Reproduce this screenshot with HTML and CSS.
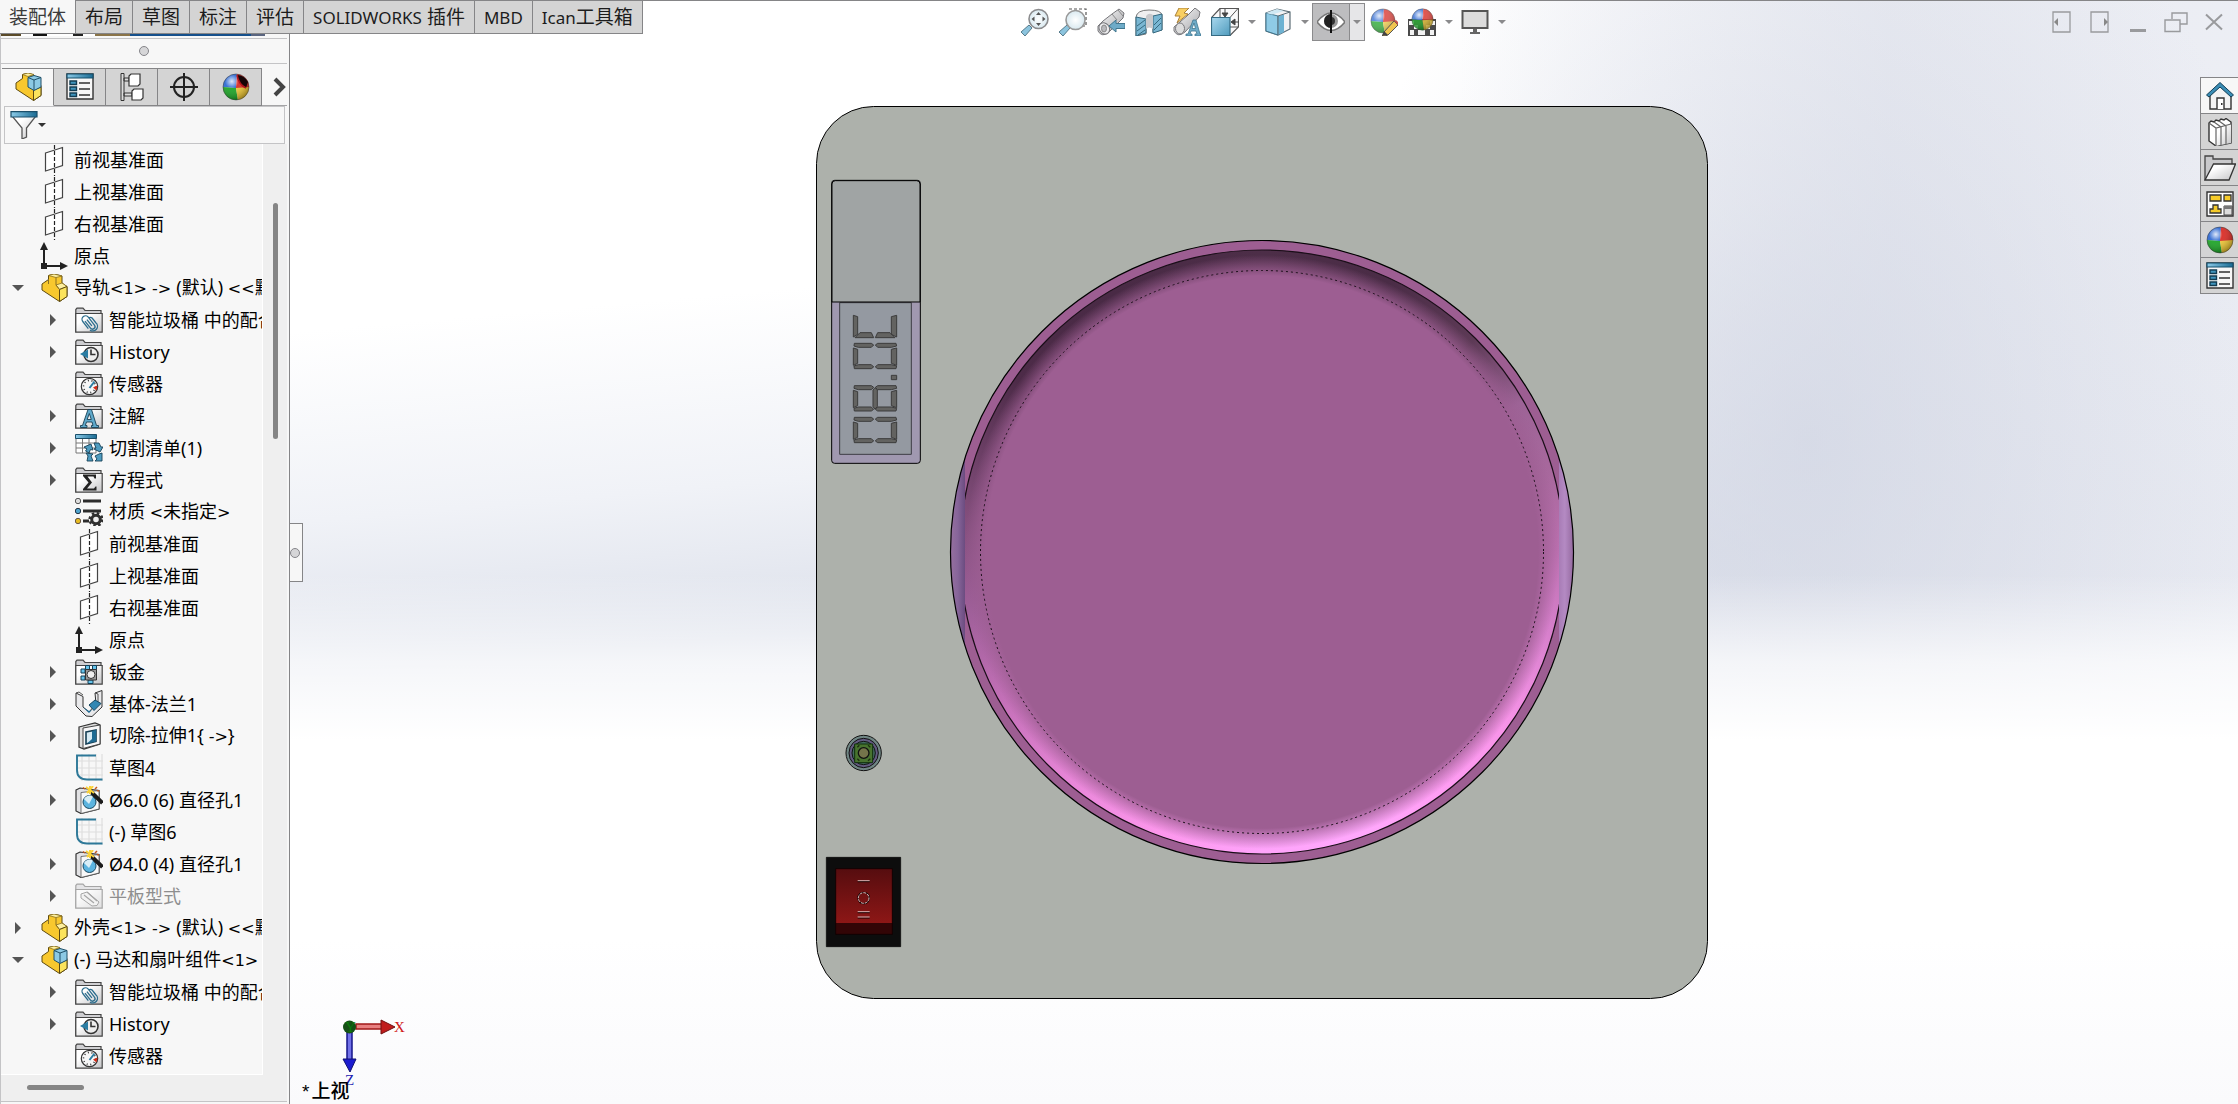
FILE: index.html
```html
<!DOCTYPE html>
<html lang="zh-CN">
<head>
<meta charset="utf-8">
<title>装配体</title>
<link rel="stylesheet" href="styles.css">
</head>
<body>
<svg class="sprite" width="0" height="0" aria-hidden="true">
  <defs>
    <linearGradient id="g-paper" x1="0" y1="0" x2="1" y2="1"><stop offset="0.3" stop-color="#fff"/><stop offset="1" stop-color="#c4c4c6"/></linearGradient>
    <linearGradient id="g-blue" x1="0" y1="0" x2="1" y2="1"><stop offset="0" stop-color="#a9d8ee"/><stop offset="1" stop-color="#4f9bbd"/></linearGradient>
    <linearGradient id="g-bar" x1="0" y1="0" x2="1" y2="0"><stop offset="0" stop-color="#8ccbe8"/><stop offset="1" stop-color="#1a6b93"/></linearGradient>
    <linearGradient id="g-tube" x1="0" y1="0" x2="1" y2="1"><stop offset="0" stop-color="#fff"/><stop offset="1" stop-color="#a2a2a6"/></linearGradient>
    <radialGradient id="g-lens"><stop offset="0" stop-color="#fff"/><stop offset="1" stop-color="#d9e9f0"/></radialGradient>
    <radialGradient id="g-shine" cx="0.35" cy="0.3" r="0.7"><stop offset="0" stop-color="#fff" stop-opacity="0.85"/><stop offset="0.35" stop-color="#fff" stop-opacity="0.1"/><stop offset="1" stop-color="#000" stop-opacity="0.35"/></radialGradient>
    <clipPath id="c-ball"><circle cx="14" cy="14" r="13"/></clipPath>

    <symbol id="i-plane" viewBox="0 0 28 32"><path d="M5.500 9L22.500 3.500V21.500L5.500 27Z" fill="#fff" stroke="#444" stroke-width="1.200"/><path d="M14.500 1V32" stroke="#222" stroke-width="1.200" stroke-dasharray="4 2"/></symbol>
    <symbol id="i-origin" viewBox="0 0 28 28"><path d="M4 5V24H22" fill="none" stroke="#222" stroke-width="2"/><path d="M0 8L4 0L8 8ZM20 20L28 24L20 28ZM1 21H7V27H1Z" fill="#222"/></symbol>
    <symbol id="i-part" viewBox="0 0 28 28"><path d="M2 10L8.500 5.500V1.500L14 0L22 2V9L27 12.500V22.500L19.500 27.500L2 16Z" fill="#f8c82e" stroke="#5d4a12" stroke-linejoin="round"/><path d="M8.500 1.500L16 3.500L22 2L14 0Z M16 11L22 9L27 12.500L19.500 15.500Z" fill="#fdf0a0" stroke="#8a7020" stroke-width="0.800"/><path d="M19.500 15.500L27 12.500V22.500L19.500 27.500Z" fill="#fbe35c" stroke="#5d4a12"/><path d="M16 3.500V11L19.500 15.500M8.500 5.500V10" fill="none" stroke="#8a7020"/></symbol>
    <symbol id="i-asm" viewBox="0 0 28 28"><path d="M2 10L8.500 5.500V1.500L14 0L20 2V9L27 12.500V22.500L19.500 27.500L2 16Z" fill="#f8c82e" stroke="#5d4a12" stroke-linejoin="round"/><path d="M8.500 1.500L14 3.500L20 1.500L14 0Z" fill="#fdf0a0" stroke="#8a7020" stroke-width="0.800"/><path d="M19.500 17L27 14V22.500L19.500 27.500Z" fill="#fbe35c" stroke="#5d4a12"/><path d="M14 4.500L20 2.500L27 4.500V14L20 17.500L14 14Z" fill="#8cc9e4" stroke="#1f4f68"/><path d="M14 4.500L20 7L27 4.500M20 7V17" fill="none" stroke="#1f4f68"/></symbol>
    <symbol id="i-folder" viewBox="0 0 28 28"><path d="M0.800 26.200V3.500L2 2.200H8L10 4.500H26V7.500" fill="#cfcfd2" stroke="#444" stroke-width="1.200"/><path d="M0.800 7.500H27.200V26.200H0.800Z" fill="url(#g-paper)" stroke="#444" stroke-width="1.200"/></symbol>
    <symbol id="i-clip" viewBox="0 0 28 28"><use href="#i-folder"/><g fill="none" stroke="#2c6d8d" stroke-width="1.300" transform="rotate(-38 14 17)"><path d="M10 21V12a3.500 3.500 0 0 1 7 0V22a2.500 2.500 0 0 1 -5 0V13M14.500 13V21M17 13a2.500 2.500 0 0 1 2.500 2V21a4.500 4.500 0 0 1 -9 2"/></g></symbol>
    <symbol id="i-history" viewBox="0 0 28 28"><use href="#i-folder"/><circle cx="16" cy="16.500" r="7" fill="#eee" stroke="#333" stroke-width="1.600"/><path d="M16 11.500V16.500H20.500" fill="none" stroke="#333" stroke-width="1.600"/><path d="M5 16L13 11.500V20.500Z" fill="#2b7da3"/></symbol>
    <symbol id="i-sensor" viewBox="0 0 28 28"><use href="#i-folder"/><circle cx="14.500" cy="16.500" r="8.200" fill="#f6f6f6" stroke="#333" stroke-width="1.200"/><circle cx="14.500" cy="16.500" r="6" fill="none" stroke="#333" stroke-width="1.500" stroke-dasharray="1 2.700"/><path d="M14.500 18L19.500 11.500" stroke="#2b7da3" stroke-width="2"/><path d="M18 17.500L22.500 15.500L21.500 20.500Z" fill="#d42a16"/></symbol>
    <symbol id="i-note" viewBox="0 0 28 28"><use href="#i-folder"/><path d="M5.500 25.500V23.500H7.500L13 7.500H16.500L21.500 23.500H23.500V25.500H16.500V23.500H18L17 20H11.500L10.300 23.500H12V25.500ZM12.200 17.500H16.300L14.300 11.500Z" fill="#5fa9cb" stroke="#173f55" stroke-width="0.900"/></symbol>
    <symbol id="i-cut" viewBox="0 0 28 28"><path d="M1 1H21V19H1Z" fill="#fff" stroke="#777"/><path d="M1 9H21M1 14H21M7.500 4V19M14 4V19" stroke="#777" stroke-width="1"/><path d="M0.500 0.500H21.500V4.500H0.500Z" fill="url(#g-bar)" stroke="#1b4f6a"/><path d="M9 13L16 10L18 16L15.500 15.500L14 19L10.500 17L12 15ZM19 9L24 9L26 13L28 13L25 18L19 15L21 14ZM11 19L18 20L16 22L18 27H12L13 22ZM27 19V27H20L22 25L20 22L24 20Z" fill="#4f9cc0" stroke="#153f56" stroke-width="0.900"/></symbol>
    <symbol id="i-sigma" viewBox="0 0 28 28"><use href="#i-folder"/><path d="M8 8.500H21V12.500H19.500L18.500 10.500H12.500L17 16.500L12 22.500H19L20.500 20.500H21.500V24.500H8V23L13.500 16.500L8 10Z" fill="#222"/></symbol>
    <symbol id="i-material" viewBox="0 0 28 28"><circle cx="3" cy="3" r="2.700" fill="#ddd" stroke="#555"/><circle cx="3" cy="13" r="2.700" fill="#4fa3cc" stroke="#234"/><circle cx="3" cy="23" r="2.700" fill="#e7bb21" stroke="#654"/><path d="M8 3H26M8 13H26M8 23H14" stroke="#2c2c2c" stroke-width="3"/><circle cx="21" cy="21.500" r="4.300" fill="#eee" stroke="#2f2f2f" stroke-width="3"/><circle cx="21" cy="21.500" r="6.300" fill="none" stroke="#2f2f2f" stroke-width="2.600" stroke-dasharray="2.500 2.450"/></symbol>
    <symbol id="i-sheet" viewBox="0 0 28 28"><use href="#i-folder"/><path d="M6 11h4v4H6ZM6 18h4v4H6ZM10.500 7.500h4v4h-4ZM17.500 7.500h4v4h-4ZM13 22h5v3.500h-5Z" fill="#66c4ec" stroke="#123f57"/><path d="M10.500 11.500H21.500V22H10.500Z" fill="#999" stroke="#333"/><circle cx="16" cy="16.500" r="4" fill="#eee" stroke="#333"/></symbol>
    <symbol id="i-flange" viewBox="0 0 28 28"><path d="M1 3L8 6.500V17L14 22L21 14L20 3L27 0.500V17L17 26.500L11 26L1 16Z" fill="#e9e9eb" stroke="#333"/><path d="M1 3L4 2L8 5M20 3L23 4V15" fill="none" stroke="#555"/><path d="M14 15L20 10L26 13.500L19 20.500Z" fill="#3287b3" stroke="#174862"/><path d="M8 17L14 23L17 20L14 21Z" fill="#1d6a94"/></symbol>
    <symbol id="i-extcut" viewBox="0 0 28 28"><path d="M4 5L20 1L25 3V22L9 27L4 25Z" fill="#ddd" stroke="#333" stroke-width="1.200"/><path d="M8 6L25 3V22L8 26.500Z" fill="#f7f7f8" stroke="#444"/><path d="M11 10L21 8V19.500L11 22Z" fill="#d7eaf3" stroke="#153d52" stroke-width="1.600"/><path d="M17 9V17L12 21.500L21 19.500V8Z" fill="#1e6a92"/></symbol>
    <symbol id="i-sketch" viewBox="0 0 28 28"><path d="M7 0V27M14 0V27M21 0V27M27 0V27M2 7H28M2 14H28M2 21H28" stroke="#dedede" stroke-width="1.200"/><path d="M21 1.500H2V16Q2 25.500 12 25.500H27.500" fill="none" stroke="#2d7898" stroke-width="1.900"/></symbol>
    <symbol id="i-hole" viewBox="0 0 28 28"><path d="M1 4L5 2L24 4.500V23L6 27.500L1 25Z" fill="#e2e2e4" stroke="#333" stroke-width="1.200"/><path d="M6 6.500L24 4.500V23L6 27.500Z" fill="#f8f8f8" stroke="#555" stroke-width="0.800"/><circle cx="14.500" cy="16" r="6.500" fill="#5cb4df" stroke="#174862"/><path d="M9 13a6.500 6.500 0 0 1 9-2.500L14 18Z" fill="#d9eef7"/><path d="M14 4L27.500 17" stroke="#1c1c1c" stroke-width="4"/><path d="M11 1L19 7M18 0L12 7M15 0V8" stroke="#fbd33a" stroke-width="2"/><path d="M8 1.500L10 3M22 1L20 3M24 5L22 4.500" stroke="#c4581b" stroke-width="1.500"/></symbol>
    <symbol id="i-flat" viewBox="0 0 28 28"><g opacity="0.45"><use href="#i-folder"/><path d="M6 12L12 10L24 20L22 23.500L17 24L6 16Z" fill="#eee" stroke="#444"/><path d="M9 13L19 21M12 10L22 19" stroke="#444" stroke-width="1.200"/></g></symbol>

    <symbol id="i-props" viewBox="0 0 28 28"><path d="M1 1H27V26H1Z" fill="#f7f7f7" stroke="#333" stroke-width="1.400"/><path d="M1 1H27V5H1Z" fill="url(#g-bar)" stroke="#17506d" stroke-width="1.200"/><path d="M4 8h6.500v3.500H4ZM4 14h6.500v3.500H4ZM4 20h6.500v3.500H4Z" fill="#3f94bd" stroke="#123c52" stroke-width="1.400"/><path d="M13 10H24M13 16H24M13 22H24" stroke="#333" stroke-width="1.400"/></symbol>
    <symbol id="i-config" viewBox="0 0 28 28"><path d="M3 0.500H6V27.500H3ZM6 5H11V8H6ZM6 20H14V23H6Z" fill="#ddd" stroke="#333"/><path d="M11 3L13 1H22V11L20 13H11ZM14 18L16 16H25V25L23 27H14Z" fill="#fff" stroke="#333" stroke-width="1.200"/></symbol>
    <symbol id="i-target" viewBox="0 0 28 28"><circle cx="14" cy="14" r="10" fill="none" stroke="#222" stroke-width="2"/><path d="M14 0V28M0 14H28" stroke="#222" stroke-width="2"/></symbol>
    <symbol id="i-ball" viewBox="0 0 28 28"><g clip-path="url(#c-ball)"><path d="M0 0H15L14 15L0 14Z" fill="#2563d0"/><path d="M15 0H28V15L14 15Z" fill="#d8221b"/><path d="M0 14L14 15L16 28H0Z" fill="#13a11d"/><path d="M14 15L28 14V28H16Z" fill="#efc62d"/><path d="M0 0H28V28H0Z" fill="url(#g-shine)"/></g><circle cx="14" cy="14" r="13" fill="none" stroke="#333" stroke-opacity="0.5"/></symbol>
    <symbol id="i-ballcut" viewBox="0 0 28 28"><use href="#i-ball"/><path d="M15 2Q22 2 26 9L24 15Q17 12 15 2Z" fill="#160406"/><path d="M15 2Q17 12 24 15" fill="none" stroke="#b3151b" stroke-width="1.500"/></symbol>
    <symbol id="i-filter" viewBox="0 0 28 28"><path d="M2 5H26L16.500 17V26L12 28V17Z" fill="url(#g-paper)" stroke="#555" stroke-width="1.300"/><path d="M1 0.700H27V6H1Z" fill="url(#g-bar)" stroke="#1b4f6a" stroke-width="1.200"/></symbol>

    <symbol id="t-fit" viewBox="0 0 28 28"><path d="M0 24L8 17L11 20L4 28Z" fill="#8cc4de" stroke="#567b8b"/><circle cx="17.500" cy="11" r="9.500" fill="url(#g-lens)" stroke="#8b8b8d" stroke-width="1.600"/><path d="M17.500 4L20 7H15ZM17.500 18L20 15H15ZM10.500 11L13.500 8.500V13.500ZM24.500 11L21.500 8.500V13.500Z" fill="#555"/></symbol>
    <symbol id="t-area" viewBox="0 0 28 28"><path d="M10 1H27V18H22" fill="none" stroke="#555" stroke-width="1.200" stroke-dasharray="3 2"/><path d="M0 24L8 17L11 20L4 28Z" fill="#8cc4de" stroke="#567b8b"/><circle cx="16.500" cy="12" r="9.500" fill="url(#g-lens)" stroke="#999" stroke-width="1.600"/></symbol>
    <symbol id="t-prev" viewBox="0 0 28 28"><path d="M1 18L6 13L15 6L22 1L27 5L26 10L12 24Q5 30 1 23Z" fill="url(#g-tube)" stroke="#77777b"/><ellipse cx="7" cy="20.500" rx="5" ry="6" transform="rotate(-35 7 20)" fill="#ececee" stroke="#77777b"/><ellipse cx="7" cy="20.500" rx="2.500" ry="3.500" fill="#b9b9bd" stroke="#888"/><path d="M15 6L20 12M21 2L26 8" stroke="#888"/><path d="M12 18L19 12V15.500H28V20.500H19V24Z" fill="#6eabc8" stroke="#41778f"/></symbol>
    <symbol id="t-section" viewBox="0 0 28 28"><path d="M1 9Q2 2 14 2Q26 2 27 7V22L18 24V10L11 11V26L1 28Z" fill="#efeff0" stroke="#777"/><path d="M1 9L11 11V25L1 28ZM18 8L27 6V22L18 25Z" fill="#7ab7d3" stroke="#35697f"/><path d="M2 18L10 12M2 23L10 17M3 27L10 22M19 17L26 10M19 22L26 15" stroke="#35697f"/><path d="M11 8Q14 4 18 7V21Q14 18 11 21Z" fill="#c9c9cc"/></symbol>
    <symbol id="t-dynamic" viewBox="0 0 28 28"><path d="M1 19L14 8L22 0L27 4L26 9L12 24Q5 30 1 23Z" fill="url(#g-tube)" stroke="#77777b"/><ellipse cx="7" cy="20.500" rx="4.500" ry="5.500" fill="#ddd" stroke="#77777b"/><path d="M6 0H16L11 5L15 6L4 15L7 8L2 8Z" fill="#f9cf62" stroke="#aa803a"/><path d="M13 28V26H15L20 12H23L27 26H28V28H22V26H24L23 23H18L17 26H19V28ZM19 20.500H22.500L21 15Z" fill="#6eabc8" stroke="#41778f" stroke-width="0.800"/></symbol>
    <symbol id="t-orient" viewBox="0 0 28 28"><path d="M9 0.500H27.500V19L19 27.500H0.500V9.500Z" fill="#f9f9fa" stroke="#555" stroke-width="1.200"/><path d="M9 0.500V9M27 0.500L19 9.500M19 19H27" stroke="#555" fill="none"/><path d="M0.500 9.500H19V27.500H0.500Z" fill="url(#g-blue)" stroke="#356b83" stroke-width="1.200"/><path d="M14 1V7M11 5L14 9L17 5ZM28 14H23M24 11L20 14L24 17Z" fill="#444" stroke="#444"/></symbol>
    <symbol id="t-display" viewBox="0 0 28 28"><path d="M2 5L13 1L26 4V21L14 27L2 23Z" fill="#f2f2f4" stroke="#5c6d76" stroke-width="1.200"/><path d="M2 5L14 8V27L2 23Z" fill="#8fcbe6" stroke="#41778f"/><path d="M14 8L20 6.500V24L14 27Z" fill="#6eb2d2"/><path d="M2 5L13 1L20 3L8 6.500Z" fill="#cfe8f3"/><path d="M14 8L26 4M14 8V27" stroke="#5c6d76"/></symbol>
    <symbol id="t-eye" viewBox="0 0 28 28"><path d="M0 14Q14 -4 28 14Q14 31 0 14Z" fill="#fff" stroke="#777" stroke-width="1.600"/><circle cx="14" cy="13" r="7" fill="#999"/><path d="M14 6A7 7 0 0 0 14 20Z" fill="#222"/><path d="M14 9a4 4 0 0 1 0 8Z" fill="#333"/><path d="M14 2V25" stroke="#111" stroke-width="2"/></symbol>
    <symbol id="t-appear" viewBox="0 0 28 28"><use href="#i-ball" x="0" y="0" width="26" height="26" opacity="0.8"/><path d="M14 24L24 13L28 17L18 27L12 29Z" fill="#f0c551" stroke="#555"/><path d="M24 13L28 17V14L26 12Z" fill="#c6524c"/><path d="M12 28L14 23L18 27Z" fill="#444"/></symbol>
    <symbol id="t-scene" viewBox="0 0 28 28"><path d="M0 11H28V28H0Z" fill="#4a4a4a"/><path d="M1 13H6V17H1ZM22 13H27V17H22ZM6 17H10V21H6ZM18 17H22V21H18ZM2 22H6V27H2ZM10 22H17V27H10ZM22 22H26V27H22Z" fill="#f2f2f2"/><use href="#i-ball" x="3" y="0" width="23" height="23" opacity="0.85"/></symbol>
    <symbol id="t-monitor" viewBox="0 0 28 28"><path d="M1.500 3H26.500V20H1.500Z" fill="#dcdcdc" stroke="#555" stroke-width="2"/><path d="M12 21H16V24H19V26H9V24H12Z" fill="#666"/></symbol>

    <symbol id="p-home" viewBox="0 0 28 28"><path d="M4 13V27H25V13L14 3Z" fill="#f3f3f3" stroke="#333" stroke-width="1.400"/><path d="M0.500 13L14 0.500L27.500 13L25 15L14 5L3 15Z" fill="#3a8db5" stroke="#123f57"/><path d="M11 27V16H18V27" fill="#fff" stroke="#333" stroke-width="1.400"/><path d="M15 21h1.500v2H15Z" fill="#333"/></symbol>
    <symbol id="p-books" viewBox="0 0 28 28"><path d="M3 5L5 3L8 4L10 2L13 3L15 1L18 2L20 0.500L25 4V25L10 28L3 23Z" fill="#fff" stroke="#333" stroke-width="1.400"/><path d="M10 10L25 6V25L10 28Z" fill="url(#g-paper)"/><path d="M3 5L10 10L25 6M10 10V28M15 9V27M20 8V26M8 4L15 9M13 3L20 8" fill="none" stroke="#666" stroke-width="1.200"/></symbol>
    <symbol id="p-open" viewBox="0 0 32 28"><path d="M1 26V2H9V5H28V10" fill="#c9c9cb" stroke="#444" stroke-width="1.300"/><path d="M1 26L9.500 10H31.500L25 26Z" fill="url(#g-paper)" stroke="#333" stroke-width="1.300"/></symbol>
    <symbol id="p-palette" viewBox="0 0 28 28"><path d="M1 2H27V26H1Z" fill="#fff" stroke="#333" stroke-width="1.400"/><path d="M4 5H15V11H4ZM18 5H25V11H18ZM4 23V19H7V15H12V19H15V23Z" fill="#f5cb2a" stroke="#333" stroke-width="1.300"/><path d="M18 16H26V25H18Z" fill="#ddd" stroke="#444"/><path d="M18 16H26V19H18Z" fill="#777"/></symbol>

    <symbol id="w-left" viewBox="0 0 28 28"><path d="M5 4H22V24H5Z" fill="none" stroke="#999a9d" stroke-width="1.300"/><path d="M10 10L6 14L10 18Z" fill="#888"/></symbol>
    <symbol id="w-right" viewBox="0 0 28 28"><path d="M5 4H22V24H5Z" fill="none" stroke="#999a9d" stroke-width="1.300"/><path d="M18 10L22 14L18 18Z" fill="#888"/></symbol>
    <symbol id="w-min" viewBox="0 0 28 28"><path d="M6 22.500H22" stroke="#999a9d" stroke-width="3"/></symbol>
    <symbol id="w-restore" viewBox="0 0 28 28"><path d="M10 11V5H25V16H18M3 12H18V23.500H3Z" fill="none" stroke="#999a9d" stroke-width="1.400"/></symbol>
    <symbol id="w-close" viewBox="0 0 28 28"><path d="M6 6.500L22 21.500M22 6.500L6 21.500" stroke="#999a9d" stroke-width="2"/></symbol>
  </defs>
</svg>

<nav class="tabs" aria-label="功能区">
  <button class="tab tab-on">装配体</button><button class="tab">布局</button><button class="tab">草图</button><button class="tab">标注</button><button class="tab">评估</button><button class="tab"><span class="latin">SOLIDWORKS</span> 插件</button><button class="tab"><span class="latin">MBD</span></button><button class="tab"><span class="latin">Ican</span>工具箱</button>
</nav>

<div class="app">
  <aside class="panel">
    <div class="ribbon-edge"></div>
    <div class="grip"><span class="dot"></span></div>
    <div class="views">
      <button class="view view-on" aria-label="设计树"><svg class="icon"><use href="#i-asm"/></svg></button>
      <button class="view" aria-label="属性"><svg class="icon"><use href="#i-props"/></svg></button>
      <button class="view" aria-label="配置"><svg class="icon"><use href="#i-config"/></svg></button>
      <button class="view" aria-label="尺寸"><svg class="icon"><use href="#i-target"/></svg></button>
      <button class="view" aria-label="外观"><svg class="icon"><use href="#i-ballcut"/></svg></button>
      <button class="more" aria-label="更多"><svg width="14" height="20" viewBox="0 0 14 20"><path d="M2 2L10 10L2 18" fill="none" stroke="#444" stroke-width="4"/></svg></button>
    </div>
    <button class="filter" aria-label="过滤器"><svg class="icon"><use href="#i-filter"/></svg><span class="caret caret-dark"></span></button>
    <div class="tree-area">
      <ul class="tree">
        <li><span class="row"><i class="exp"></i><svg class="icon tall"><use href="#i-plane"/></svg>前视基准面</span></li>
        <li><span class="row"><i class="exp"></i><svg class="icon tall"><use href="#i-plane"/></svg>上视基准面</span></li>
        <li><span class="row"><i class="exp"></i><svg class="icon tall"><use href="#i-plane"/></svg>右视基准面</span></li>
        <li><span class="row"><i class="exp"></i><svg class="icon"><use href="#i-origin"/></svg>原点</span></li>
        <li><span class="row"><i class="exp open"></i><svg class="icon"><use href="#i-part"/></svg><span>导轨<span class="sym">&lt;1&gt; -&gt; </span>(默认) <span class="sym">&lt;&lt;</span>默认</span></span>
          <ul>
            <li><span class="row"><i class="exp shut"></i><svg class="icon"><use href="#i-clip"/></svg>智能垃圾桶 中的配合</span></li>
            <li><span class="row"><i class="exp shut"></i><svg class="icon"><use href="#i-history"/></svg>History</span></li>
            <li><span class="row"><i class="exp"></i><svg class="icon"><use href="#i-sensor"/></svg>传感器</span></li>
            <li><span class="row"><i class="exp shut"></i><svg class="icon"><use href="#i-note"/></svg>注解</span></li>
            <li><span class="row"><i class="exp shut"></i><svg class="icon"><use href="#i-cut"/></svg>切割清单(1)</span></li>
            <li><span class="row"><i class="exp shut"></i><svg class="icon"><use href="#i-sigma"/></svg>方程式</span></li>
            <li><span class="row"><i class="exp"></i><svg class="icon"><use href="#i-material"/></svg><span>材质 <span class="sym">&lt;</span>未指定<span class="sym">&gt;</span></span></span></li>
            <li><span class="row"><i class="exp"></i><svg class="icon tall"><use href="#i-plane"/></svg>前视基准面</span></li>
            <li><span class="row"><i class="exp"></i><svg class="icon tall"><use href="#i-plane"/></svg>上视基准面</span></li>
            <li><span class="row"><i class="exp"></i><svg class="icon tall"><use href="#i-plane"/></svg>右视基准面</span></li>
            <li><span class="row"><i class="exp"></i><svg class="icon"><use href="#i-origin"/></svg>原点</span></li>
            <li><span class="row"><i class="exp shut"></i><svg class="icon"><use href="#i-sheet"/></svg>钣金</span></li>
            <li><span class="row"><i class="exp shut"></i><svg class="icon"><use href="#i-flange"/></svg>基体-法兰1</span></li>
            <li><span class="row"><i class="exp shut"></i><svg class="icon"><use href="#i-extcut"/></svg><span>切除-拉伸1{ <span class="sym">-&gt;</span>}</span></span></li>
            <li><span class="row"><i class="exp"></i><svg class="icon"><use href="#i-sketch"/></svg>草图4</span></li>
            <li><span class="row"><i class="exp shut"></i><svg class="icon"><use href="#i-hole"/></svg>Ø6.0 (6) 直径孔1</span></li>
            <li><span class="row"><i class="exp"></i><svg class="icon"><use href="#i-sketch"/></svg>(-) 草图6</span></li>
            <li><span class="row"><i class="exp shut"></i><svg class="icon"><use href="#i-hole"/></svg>Ø4.0 (4) 直径孔1</span></li>
            <li><span class="row off"><i class="exp shut"></i><svg class="icon"><use href="#i-flat"/></svg>平板型式</span></li>
          </ul>
        </li>
        <li><span class="row"><i class="exp shut"></i><svg class="icon"><use href="#i-part"/></svg><span>外壳<span class="sym">&lt;1&gt; -&gt; </span>(默认) <span class="sym">&lt;&lt;</span>默认</span></span></li>
        <li><span class="row"><i class="exp open"></i><svg class="icon"><use href="#i-asm"/></svg><span>(-) 马达和扇叶组件<span class="sym">&lt;1&gt;</span></span></span>
          <ul>
            <li><span class="row"><i class="exp shut"></i><svg class="icon"><use href="#i-clip"/></svg>智能垃圾桶 中的配合</span></li>
            <li><span class="row"><i class="exp shut"></i><svg class="icon"><use href="#i-history"/></svg>History</span></li>
            <li><span class="row"><i class="exp"></i><svg class="icon"><use href="#i-sensor"/></svg>传感器</span></li>
          </ul>
        </li>
      </ul>
      <div class="vscroll"><span class="vthumb"></span></div>
    </div>
    <div class="hscroll"><span class="hthumb"></span></div>
    <div class="panel-foot"></div>
  </aside>

  <main class="viewport">
    <svg class="model" viewBox="290 0 1948 1104" role="img" aria-label="上视图模型">
      <defs>
        <linearGradient id="m-left" x1="0" x2="1"><stop offset="0" stop-color="#96709f"/><stop offset="0.500" stop-color="#87659a"/><stop offset="1" stop-color="#6b4c80"/></linearGradient>
        <linearGradient id="m-right" x1="0" x2="1"><stop offset="0" stop-color="#a87cb6"/><stop offset="0.400" stop-color="#b48ac3"/><stop offset="1" stop-color="#94699f"/></linearGradient>
        <radialGradient id="m-floor"><stop offset="0.930" stop-color="#9d5e92"/><stop offset="1" stop-color="#9d5e92" stop-opacity="0"/></radialGradient>
        <linearGradient id="m-red" x1="0" y1="0" x2="0" y2="1"><stop offset="0" stop-color="#560d0f"/><stop offset="1" stop-color="#8d1716"/></linearGradient>
        <clipPath id="m-mid"><path d="M965 230H1559V880H965Z"/></clipPath>
        <g id="seg0"><path d="M160 14L173 18V60L160 66ZM290 14L274 18V60L290 66ZM163 0H214L221 5L214 12H175L162 8ZM288 0H233L226 5L233 12H274L290 8ZM163 76H214L221 71L214 64H175L162 68ZM288 76H233L226 71L233 64H274L290 68Z"/></g>
      </defs>
      <rect x="816.500" y="106.500" width="891" height="892" rx="57" fill="#adb1ab" stroke="#000"/>

      <circle cx="1262" cy="552" r="311.500" fill="#9d5e92"/>
      <path d="M965 458Q936 552 965 646Z" fill="url(#m-left)"/>
      <path d="M1559 458Q1588 552 1559 646Z" fill="url(#m-right)"/>
      <g clip-path="url(#m-mid)">
        <foreignObject x="960" y="250" width="604" height="604"><div class="bowl"></div></foreignObject>
        <circle cx="1262" cy="552" r="302" fill="none" stroke="#1a0e18" stroke-width="1.200"/>
      </g>
      <circle cx="1262" cy="552" r="297" fill="url(#m-floor)"/>
      <circle cx="1262" cy="552" r="281.500" fill="none" stroke="#1a0e18" stroke-width="1" stroke-dasharray="2 3"/>
      <circle cx="1262" cy="552" r="311.500" fill="none" stroke="#000" stroke-width="1.200"/>

      <g transform="translate(800 90) scale(0.33333)">
        <rect x="95" y="271" width="266" height="849" rx="9" fill="#a098b0" stroke="#000" stroke-width="3"/>
        <path d="M119 638H334V1093H119Z" fill="#9499a1" stroke="#3d3d44" stroke-width="3"/>
        <path d="M96 636V282Q96 272 106 272H350Q360 272 360 282V636Z" fill="#a0a4a4" stroke="#000" stroke-width="3"/>
        <g fill="#636361" stroke="#3b3b3b" stroke-width="3">
          <path d="M160 676L173 680V733L160 741ZM290 676L274 680V733L290 741ZM165 743H221L214 728H180ZM285 743H226L233 728H270Z"/>
          <use href="#seg0" y="760"/>
          <path d="M274 856H290V869H274Z"/>
          <use href="#seg0" y="887"/><path d="M219 900L225 893L232 900V950L225 957L219 950Z"/>
          <use href="#seg0" y="982"/>
        </g>
      </g>

      <g transform="translate(800 700) scale(0.33333)">
        <circle cx="191" cy="159" r="53" fill="#6f8583" stroke="#111" stroke-width="3"/>
        <circle cx="191" cy="159" r="44" fill="#625a80" stroke="#111" stroke-width="3"/>
        <circle cx="191" cy="159" r="35" fill="#436a60" stroke="#111" stroke-width="3"/>
        <path d="M164 132H218V188H164Z" fill="#48732f" stroke="#10300c" stroke-width="3"/>
        <circle cx="191" cy="159" r="16" fill="#74744a" stroke="#111" stroke-width="4"/>
        <path d="M172 142L178 136M204 136L211 142M172 176L178 182M204 182L211 176" stroke="#1b2e10" stroke-width="4"/>
        <path d="M79 472H302V740H79Z" fill="#0d0d0d" stroke="#000" stroke-width="2"/>
        <path d="M107 506H277V669H107Z" fill="url(#m-red)"/>
        <path d="M107 669H277V703H107Z" fill="#330506"/>
        <path d="M107 506H277V703H107Z" fill="none" stroke="#120203" stroke-width="3"/>
        <path d="M173 545H209M173 638H209M173 654H209" stroke="#100" stroke-width="3"/>
        <path d="M173 542H209M173 635H209M173 651H209" stroke="#d8b4b4" stroke-width="3"/>
        <circle cx="191" cy="594" r="17" fill="none" stroke="#100" stroke-width="4"/>
        <circle cx="191" cy="594" r="16" fill="none" stroke="#e0c4c4" stroke-width="3" stroke-dasharray="9 3"/>
      </g>
    </svg>

    <button class="splitter" aria-label="折叠面板"><span class="dot"></span></button>

    <div class="hud" role="toolbar">
      <button aria-label="整屏显示"><svg class="icon"><use href="#t-fit"/></svg></button>
      <button aria-label="局部放大"><svg class="icon"><use href="#t-area"/></svg></button>
      <button aria-label="上一视图"><svg class="icon"><use href="#t-prev"/></svg></button>
      <button aria-label="剖面视图"><svg class="icon"><use href="#t-section"/></svg></button>
      <button aria-label="动态注解"><svg class="icon"><use href="#t-dynamic"/></svg></button>
      <button aria-label="视图定向"><svg class="icon"><use href="#t-orient"/></svg></button>
      <button class="drop" aria-label="视图定向选项"><span class="caret"></span></button>
      <button aria-label="显示样式"><svg class="icon"><use href="#t-display"/></svg></button>
      <button class="drop" aria-label="显示样式选项"><span class="caret"></span></button>
      <button class="pressed" aria-label="隐藏项目"><svg class="icon"><use href="#t-eye"/></svg></button>
      <button class="drop pressed-drop" aria-label="隐藏项目选项"><span class="caret"></span></button>
      <button aria-label="编辑外观"><svg class="icon"><use href="#t-appear"/></svg></button>
      <button aria-label="应用布景"><svg class="icon"><use href="#t-scene"/></svg></button>
      <button class="drop" aria-label="布景选项"><span class="caret"></span></button>
      <button aria-label="视图设定"><svg class="icon"><use href="#t-monitor"/></svg></button>
      <button class="drop" aria-label="视图设定选项"><span class="caret"></span></button>
    </div>

    <div class="window-keys">
      <button aria-label="左窗格"><svg class="icon"><use href="#w-left"/></svg></button>
      <button aria-label="右窗格"><svg class="icon"><use href="#w-right"/></svg></button>
      <button aria-label="最小化"><svg class="icon"><use href="#w-min"/></svg></button>
      <button aria-label="还原"><svg class="icon"><use href="#w-restore"/></svg></button>
      <button aria-label="关闭"><svg class="icon"><use href="#w-close"/></svg></button>
    </div>

    <div class="taskpane">
      <button class="task-on" aria-label="资源"><svg class="icon"><use href="#p-home"/></svg></button>
      <button aria-label="设计库"><svg class="icon"><use href="#p-books"/></svg></button>
      <button aria-label="文件探索器"><svg class="icon wide"><use href="#p-open"/></svg></button>
      <button aria-label="视图调色板"><svg class="icon"><use href="#p-palette"/></svg></button>
      <button aria-label="外观布景"><svg class="icon"><use href="#i-ball"/></svg></button>
      <button aria-label="自定义属性"><svg class="icon"><use href="#i-props"/></svg></button>
    </div>

    <svg class="triad" width="64" height="72" viewBox="0 0 64 72" aria-label="坐标轴">
      <path d="M14 7H42V12H14Z" fill="#e88080" stroke="#a01818" stroke-width="1.500"/><path d="M39 3L53 10L39 17Z" fill="#c01c1c" stroke="#701010"/>
      <path d="M5 14H10V44H5Z" fill="#7272e8" stroke="#15158a" stroke-width="1.500"/><path d="M1 42H14L8 55Z" fill="#1b1bd0" stroke="#101070"/>
      <circle cx="7.500" cy="10" r="6.500" fill="#155015"/><text x="3" y="15" class="axis" fill="#0a7a0a">Y</text>
      <text x="52" y="15" class="axis" fill="#d01818">X</text><text x="3" y="68" class="axis" fill="#2020b0">Z</text>
    </svg>
    <div class="view-name">*上视</div>
  </main>
</div>
</body>
</html>
```
FILE: styles.css
```css
* { box-sizing: border-box; }

body {
  margin: 0;
  height: 100vh;
  overflow: hidden;
  position: relative;
  background: #f7f7f7;
  color: #000;
  font: 18px/32px "Noto Sans", "Noto Sans CJK SC", sans-serif;
}

button {
  margin: 0;
  padding: 0;
  border: 0;
  background: none;
  color: inherit;
  font: inherit;
}

svg { display: block; flex: none; }
.sprite { position: absolute; }
.icon { width: 28px; height: 28px; }
.icon.tall { height: 32px; }
.icon.wide { width: 32px; }

.app {
  display: flex;
  height: 100%;
  border-top: 1px solid #858587;
}

/* Ribbon tabs lie over the panel and the viewport */
.tabs {
  position: absolute;
  top: 0;
  left: 0;
  z-index: 2;
  display: flex;
  height: 34px;
  border-bottom: 1px solid #858587;
}
.tab {
  padding: 0 9px;
  border-top: 1px solid #858587;
  border-right: 1px solid #858587;
  background: #d4d4d4;
  color: #1c1c1c;
  font-size: 19px;
  line-height: 32px;
  white-space: nowrap;
}
.tab-on { border-top: 0; background: #f7f7f7; color: #3c3c3c; }
.latin { font-size: 17px; }

/* Feature manager panel */
.panel {
  display: flex;
  flex-direction: column;
  flex: none;
  width: 290px;
  padding-top: 33px;
  border-left: 1px solid #c4c4c6;
  border-right: 1px solid #858587;
  background: #f7f7f7;
}
.ribbon-edge {
  height: 5px;
  margin-right: 2px;
  border-bottom: 1px solid #c4c4c6;
  background: linear-gradient(90deg, #5a4a28 0 20px, #fff 20px 32px, #111 32px 46px, #fff 46px 72px, #222 72px 82px, #fff 82px 94px, #8a7448 94px 129px, #15508c 129px 250px, #5a6580 250px 264px, #f7f7f7 264px) top / 100% 2px no-repeat;
}
.grip {
  display: flex;
  align-items: center;
  justify-content: center;
  height: 25px;
  margin-right: 2px;
  border-bottom: 1px solid #c4c4c6;
}
.dot {
  width: 10px;
  height: 10px;
  border: 1px solid #85858a;
  border-radius: 50%;
  background: #d6d6d8;
}
.views {
  display: flex;
  height: 38px;
  margin: 4px 2px 0 1px;
  border-bottom: 1px solid #a4a4a6;
}
.view {
  display: flex;
  align-items: center;
  justify-content: center;
  width: 52px;
  height: 38px;
  border: solid #858587;
  border-width: 1px 1px 1px 0;
  background: #d4d4d4;
}
.view-on { border-bottom-color: #f7f7f7; background: #f7f7f7; }
.more { display: flex; align-items: center; padding-left: 11px; }
.filter {
  display: flex;
  align-items: center;
  height: 38px;
  margin: 0 4px 0 3px;
  padding-left: 5px;
  border: 1px solid #c4c4c6;
}
.caret {
  border: solid transparent;
  border-width: 4px 4px 0;
  border-top-color: #8a8a8c;
}
.caret-dark { border-top-color: #333; }

.tree-area { display: flex; flex: 1; min-height: 0; margin-right: 2px; }
.tree {
  flex: 1;
  min-width: 0;
  margin: 0;
  padding: 0;
  overflow: hidden;
  list-style: none;
  border: solid #fff;
  border-width: 0 1px 1px 0;
}
.tree ul { margin: 0; padding: 0 0 0 35px; list-style: none; }
.row {
  display: flex;
  align-items: center;
  gap: 6px;
  height: 32px;
  padding-left: 9px;
  white-space: pre;
}
.row.off { color: #8e8e8e; }
.sym { font-family: "DejaVu Sans", sans-serif; font-size: 16px; }
.exp { width: 16px; height: 12px; margin-right: 8px; flex: none; }
.exp.open { background: #555; clip-path: polygon(2px 3px, 14px 3px, 8px 9px); }
.exp.shut { background: #555; clip-path: polygon(5px 0, 11px 6px, 5px 12px); }
.vscroll { width: 24px; padding: 59px 0 0 10px; background: #efefef; }
.vthumb { display: block; width: 5px; height: 236px; border-radius: 3px; background: #858585; }
.hscroll { height: 26px; margin-right: 2px; padding: 10px 0 0 26px; background: #efefef; }
.hthumb { display: block; width: 57px; height: 5px; border-radius: 3px; background: #858585; }
.panel-foot { height: 3px; margin-right: 2px; border-top: 1px solid #c4c4c6; }

/* Graphics area */
.viewport {
  position: relative;
  flex: 1;
  min-width: 0;
  overflow: hidden;
  background:
    linear-gradient(180deg, rgba(255, 255, 255, 0) 52%, rgba(255, 255, 255, 0.7) 60%, #fff 67%, #fff 85%, #fafafc 100%),
    radial-gradient(ellipse 25% 60% at 78% 40%, rgba(205, 210, 225, 0.65), rgba(205, 210, 225, 0)),
    linear-gradient(90deg, rgba(236, 237, 243, 0) 60%, rgba(232, 234, 241, 0.9) 82%, rgba(234, 236, 243, 0.9) 100%),
    linear-gradient(175deg, #fff 0, #fff 26%, #f0f2f7 41%, #dde1eb 53%, #dfe3ed 60%);
}
.model { width: 100%; height: calc(100% + 1px); margin-top: -1px; }
.bowl {
  width: 604px;
  height: 604px;
  border-radius: 50%;
  background: conic-gradient(#4d2e48 0deg, #4a2c46 25deg, #5d3a56 45deg, #9d6396 60deg, #a8689d 75deg, #bc70b0 90deg, #d67fcb 105deg, #f793e8 125deg, #ff9ef4 145deg, #ffa8fc 160deg, #ffa4fb 180deg, #fc97ec 200deg, #e886d8 220deg, #c470b8 240deg, #a0609a 258deg, #86507f 275deg, #6a3e64 290deg, #4d2b48 305deg, #492a45 330deg, #4d2e48 360deg);
}
.splitter {
  position: absolute;
  top: 522px;
  left: 0;
  display: flex;
  align-items: center;
  width: 13px;
  height: 59px;
  border: 1px solid #858587;
  border-left: 0;
  background: #f7f7f7;
}
.hud {
  position: absolute;
  top: 2px;
  left: 0;
  right: 3px;
  display: flex;
  justify-content: center;
  pointer-events: none;
}
.hud button, .window-keys button {
  display: flex;
  align-items: center;
  justify-content: center;
  width: 38px;
  height: 38px;
  pointer-events: auto;
}
.hud .drop { width: 15px; }
.hud .pressed { border: 1px solid #8b8b8d; background: #bdbdbf; }
.hud .pressed-drop { border: 1px solid #8b8b8d; border-left: 0; background: #e6e6e8; }
.window-keys { position: absolute; top: 2px; right: 5px; display: flex; }
.taskpane {
  position: absolute;
  top: 76px;
  right: 0;
  width: 38px;
  border: solid #858587;
  border-width: 1px 0 0 1px;
}
.taskpane button {
  display: flex;
  align-items: center;
  justify-content: center;
  width: 100%;
  height: 36px;
  border-bottom: 1px solid #858587;
  background: #d4d4d4;
}
.taskpane .task-on { background: #f7f7f7; }
.triad { position: absolute; left: 52px; bottom: 15px; }
.axis { font: 15px "Liberation Serif", serif; }
.view-name {
  position: absolute;
  left: 10px;
  bottom: 0;
  font: 500 19px/22px "Liberation Mono", "Noto Sans CJK SC", monospace;
}
```
